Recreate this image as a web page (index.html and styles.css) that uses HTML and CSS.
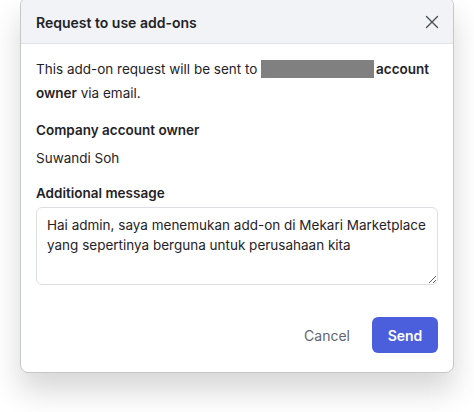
FILE: index.html
```html
<!DOCTYPE html>
<html lang="en">
<head>
    <meta charset="UTF-8">
    <title>Request to use add-ons</title>
    <link rel="stylesheet" href="styles.css">
</head>
<body>

<div class="modal">
    <div class="modal-header">
        <h2 class="modal-title">Request to use add-ons</h2>
        <button class="close-btn" aria-label="Close">
            <svg width="14" height="14" viewBox="0 0 14 14"><path d="M1.5 1.5L12.5 12.5M12.5 1.5L1.5 12.5" stroke="#4a4f57" stroke-width="1.4" stroke-linecap="round"/></svg>
        </button>
    </div>

    <div class="modal-body">
        <p class="intro">This add-on request will be sent to <span class="redacted"></span> <b>account owner</b> via email.</p>

        <div class="field-label">Company account owner</div>
        <div class="field-value">Suwandi Soh</div>

        <div class="field-label msg-label">Additional message</div>
        <textarea class="message" rows="3">Hai admin, saya menemukan add-on di Mekari Marketplace yang sepertinya berguna untuk perusahaan kita</textarea>
    </div>

    <div class="modal-footer">
        <button class="btn-cancel">Cancel</button>
        <button class="btn-send">Send</button>
    </div>
</div>

</body>
</html>
```

FILE: styles.css
```css
html, body { min-height: 100%; }
body { margin: 0; padding: 0 20px 40px; background: #fff; font-family: Inter, "Noto Sans", sans-serif; color: #1f2328; }
.modal { margin-top: -3px; border: 1px solid #c6c7ca; border-radius: 8px; background: #fff; overflow: hidden; box-shadow: 0 18px 30px rgba(0, 0, 0, 0.16); }
.modal-header { display: flex; align-items: center; justify-content: space-between; height: 46px; padding: 0 14px 0 15px; background: #f1f3f7; border-bottom: 1px solid #dfe2e7; box-sizing: border-box; }
.modal-title { margin: 3px 0 0; font-size: 14px; font-weight: 600; }
.close-btn { display: flex; margin-top: 3px; padding: 0; border: none; background: none; cursor: pointer; }
.modal-body { padding: 13px 15px 0; font-size: 13.5px; }
.intro { margin: 0; line-height: 24px; }
.intro b { font-weight: 600; }
.redacted { display: inline-block; width: 113px; height: 18px; background: #808080; vertical-align: -4px; margin-right: -2px; }
.field-label { margin-top: 15px; line-height: 20px; font-weight: 600; }
.field-value { margin-top: 8px; line-height: 20px; }
.msg-label { margin-top: 15px; }
.message { display: block; width: 100%; height: 78px; margin-top: 4px; padding: 7px 8px 7px 10px; box-sizing: border-box; border: 1px solid #dcdee2; border-radius: 6px; font-family: inherit; font-size: 13.5px; line-height: 20px; color: #1f2328; resize: vertical; overflow: hidden; }
.modal-footer { display: flex; justify-content: flex-end; align-items: center; gap: 22px; padding: 32px 15px 19px; }
.btn-cancel { padding: 0; border: none; background: none; font-family: inherit; font-size: 14px; color: #5f6672; cursor: pointer; }
.btn-send { width: 66px; height: 36px; border: none; border-radius: 6px; background: #4b5fdc; color: #fff; font-family: inherit; font-size: 14px; font-weight: 600; cursor: pointer; }
```
